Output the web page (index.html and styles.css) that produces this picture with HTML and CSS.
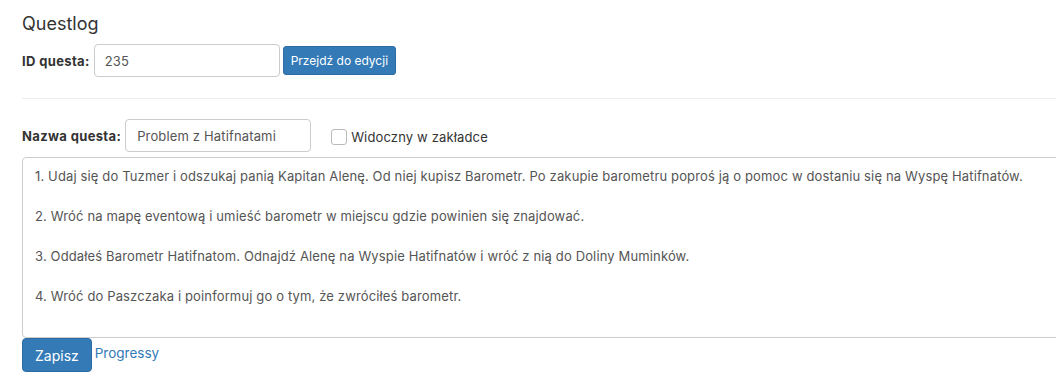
FILE: index.html
```html
<!DOCTYPE html>
<html lang="pl">
<head>
<meta charset="utf-8">
<title>Questlog</title>
<link rel="stylesheet" href="styles.css">
</head>
<body>
<main class="page">
  <h1 class="title">Questlog</h1>
  <div class="row row-id">
    <label class="label" for="qid">ID questa:</label>
    <input class="input input-id" id="qid" type="text" value="235">
    <button class="btn btn-sm">Przejdź do edycji</button>
  </div>
  <hr class="sep">
  <div class="row row-name">
    <label class="label" for="qname">Nazwa questa:</label>
    <input class="input input-name" id="qname" type="text" value="Problem z Hatifnatami">
    <label class="check"><span class="box"></span>Widoczny w zakładce</label>
  </div>
  <textarea class="text">1. Udaj się do Tuzmer i odszukaj panią Kapitan Alenę. Od niej kupisz Barometr. Po zakupie barometru poproś ją o pomoc w dostaniu się na Wyspę Hatifnatów.

2. Wróć na mapę eventową i umieść barometr w miejscu gdzie powinien się znajdować.

3. Oddałeś Barometr Hatifnatom. Odnajdź Alenę na Wyspie Hatifnatów i wróć z nią do Doliny Muminków.

4. Wróć do Paszczaka i poinformuj go o tym, że zwróciłeś barometr.</textarea>
  <div class="actions">
    <button class="btn btn-md">Zapisz</button>
    <a class="link" href="#">Progressy</a>
  </div>
</main>
</body>
</html>
```

FILE: styles.css
```css
html, body {
  margin: 0;
  padding: 0;
  overflow: hidden;
  background: #fff;
}
body {
  font-family: Inter, "Noto Sans", sans-serif;
  color: #333;
  font-size: 13px;
}
.page {
  padding: 12px 0 0 22px;
  width: 1060px;
}
.title {
  margin: 0;
  font-size: 18px;
  font-weight: 400;
  line-height: 24px;
  color: #333;
}
.row {
  display: flex;
  align-items: center;
}
.row-id {
  margin-top: 8px;
  height: 33px;
}
.label {
  font-weight: 700;
  font-size: 13px;
  letter-spacing: 0.35px;
  color: #333;
  margin-right: 4px;
}
.input {
  font-family: inherit;
  font-size: 13px;
  letter-spacing: 0.15px;
  color: #555;
  height: 33px;
  box-sizing: border-box;
  border: 1px solid #ccc;
  border-radius: 4px;
  padding: 0 10px;
  background: #fff;
}
.input-id {
  width: 186px;
  padding-left: 10px;
}
.btn {
  font-family: inherit;
  background: #337ab7;
  color: #fff;
  border: 1px solid #2e6da4;
  border-radius: 3px;
  cursor: pointer;
}
.btn-sm {
  margin-left: 3px;
  height: 29px;
  padding: 0 7px;
  font-size: 12px;
}
.sep {
  margin: 21px 0 0 0;
  border: 0;
  border-top: 1px solid #eee;
}
.row-name {
  margin-top: 20px;
  height: 33px;
}
.input-name {
  width: 186px;
  padding-left: 11px;
}
.check {
  display: flex;
  align-items: center;
  margin-left: 20px;
  font-size: 13px;
  letter-spacing: 0.15px;
  color: #333;
  margin-top: 2px;
}
.box {
  width: 16px;
  height: 16px;
  box-sizing: border-box;
  border: 1px solid #bbb;
  border-radius: 3px;
  margin-right: 4px;
  background: #fff;
}
.text {
  display: block;
  margin-top: 5px;
  width: 1060px;
  height: 181px;
  box-sizing: border-box;
  border: 1px solid #ccc;
  border-radius: 4px;
  padding: 8px 12px;
  font-family: inherit;
  font-size: 13px;
  letter-spacing: 0.14px;
  line-height: 20px;
  color: #555;
  resize: none;
}
.actions {
  display: flex;
  align-items: center;
}
.btn-md {
  height: 34px;
  padding: 0 12px;
  font-size: 14px;
  border-radius: 4px;
}
.link {
  margin-left: 3px;
  color: #337ab7;
  text-decoration: none;
  font-size: 13.5px;
  margin-top: -4px;
}
```
